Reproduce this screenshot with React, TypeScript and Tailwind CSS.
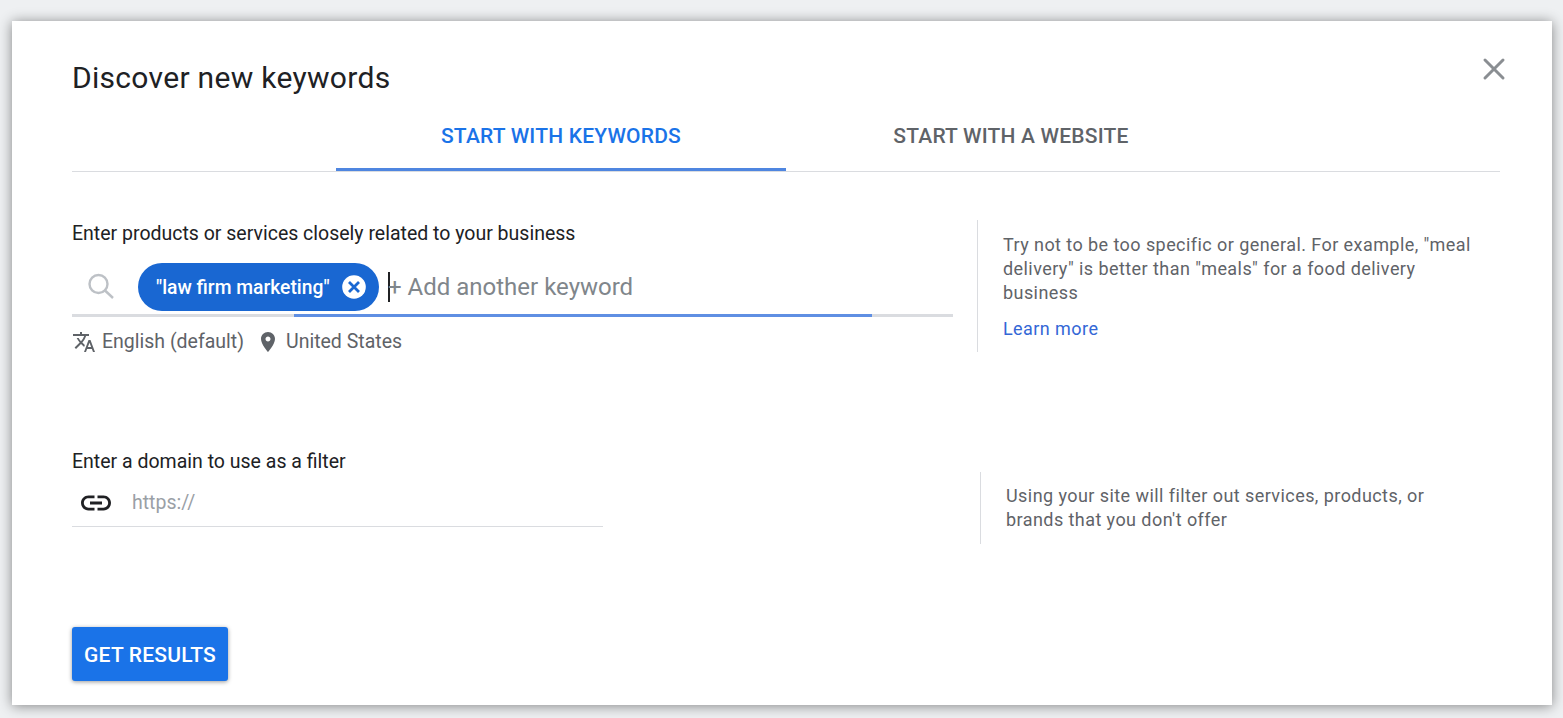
import { X } from 'lucide-react'

function TranslateIcon() {
  return (
    <svg width="24" height="24" viewBox="0 0 24 24" fill="#5f6368">
      <path d="M12.87 15.07l-2.54-2.51.03-.03c1.74-1.94 2.98-4.17 3.71-6.53H17V4h-7V2H8v2H1v1.99h11.17C11.5 7.92 10.44 9.75 9 11.35 8.07 10.32 7.3 9.19 6.69 8h-2c.73 1.63 1.73 3.17 2.98 4.56l-5.09 5.02L4 19l5-5 3.11 3.11.76-2.04zM18.5 10h-2L12 22h2l1.12-3h4.75L21 22h2l-4.5-12zm-2.62 7l1.62-4.33L19.12 17h-3.24z" />
    </svg>
  )
}

function PinIcon() {
  return (
    <svg width="24" height="24" viewBox="0 0 24 24" fill="#5f6368">
      <path d="M12 2C8.13 2 5 5.13 5 9c0 5.25 7 13 7 13s7-7.75 7-13c0-3.87-3.13-7-7-7zm0 9.5c-1.38 0-2.5-1.12-2.5-2.5s1.12-2.5 2.5-2.5 2.5 1.12 2.5 2.5-1.12 2.5-2.5 2.5z" />
    </svg>
  )
}

function SearchIcon() {
  return (
    <svg width="26" height="26" viewBox="0 0 26 26" fill="none" stroke="#bdc1c6" strokeWidth="2.4" className="-mt-[2px] ml-[16px] shrink-0">
      <circle cx="10.5" cy="11" r="9" />
      <path d="M17 17.5l8 7.5" />
    </svg>
  )
}

function LinkIcon() {
  return (
    <svg width="36" height="36" viewBox="0 0 24 24" fill="#202124">
      <path d="M3.9 12c0-1.71 1.39-3.1 3.1-3.1h4V7H7c-2.76 0-5 2.24-5 5s2.24 5 5 5h4v-1.9H7c-1.71 0-3.1-1.39-3.1-3.1zM8 13h8v-2H8v2zm9-6h-4v1.9h4c1.71 0 3.1 1.39 3.1 3.1s-1.39 3.1-3.1 3.1h-4V17h4c2.76 0 5-2.24 5-5s-2.24-5-5-5z" />
    </svg>
  )
}

function ChipClose() {
  return (
    <svg width="24" height="24" viewBox="0 0 24 24" className="shrink-0">
      <circle cx="12" cy="12" r="11.8" fill="#ffffff" />
      <path d="M7 7l10 10M17 7L7 17" stroke="#1967d2" strokeWidth="2.8" fill="none" />
    </svg>
  )
}

export default function App() {
  return (
    <div className="h-[718px] overflow-hidden bg-[#eef0f2] pt-[21px] pl-[12px] font-['Roboto',sans-serif]">
      <div className="relative h-[684px] w-[1540px] bg-white pl-[60px] pr-[52px] shadow-[0_1px_12px_rgba(0,0,0,0.45)]">
        {/* Close */}
        <button className="absolute top-[30px] right-[40px] text-[#8a8e92]">
          <X size={36} strokeWidth={2} />
        </button>

        {/* Header */}
        <h1 className="pt-[38px] text-[30px] leading-[38px] tracking-[0.3px] text-[#202124]">Discover new keywords</h1>

        {/* Tabs */}
        <div className="mt-[15px] flex h-[60px] justify-center border-b border-[#dadce0]">
          <div className="flex h-[59px] w-[450px] items-center justify-center border-b-[3px] border-[#4f86e0] pb-[7px] text-[21px] font-medium tracking-[0.2px] text-[#1a73e8]">
            START WITH KEYWORDS
          </div>
          <div className="flex h-[59px] w-[450px] items-center justify-center pb-[10px] text-[21px] font-medium tracking-[0.2px] text-[#5f6368]">
            START WITH A WEBSITE
          </div>
        </div>

        {/* Keywords section */}
        <div className="mt-[50px] flex">
          <div className="w-[881px]">
            <p className="text-[19.5px] leading-[24px] text-[#202124]">Enter products or services closely related to your business</p>
            <div className="relative mt-[18px] flex h-[53px] items-center border-b-[3px] border-[#dadce0] pb-[5px]">
              <SearchIcon />
              <div className="ml-[24px] flex h-[48px] w-[241px] items-center justify-between rounded-full bg-[#1967d2] pl-[18px] pr-[13px] text-[19.3px] font-medium text-white">
                <span className="whitespace-nowrap pt-[4px]">"law firm marketing"</span>
                <ChipClose />
              </div>
              <span className="ml-[9px] h-[30px] w-[2px] bg-[#202124]" />
              <span className="ml-[-2px] text-[24px] text-[#80868b]">+ Add another keyword</span>
              <span className="absolute right-[81px] bottom-[-3px] left-[222px] h-[3px] bg-[#5f8fe3]" />
            </div>
            <div className="mt-[11px] flex items-center text-[19.5px] leading-[28px] text-[#5f6368]">
              <TranslateIcon />
              <span className="ml-[6px]">English (default)</span>
              <span className="ml-[12px]"><PinIcon /></span>
              <span className="ml-[6px]">United States</span>
            </div>
          </div>
          <div className="ml-[24px] -mt-[2px] h-[132px] border-l border-[#dadce0] pl-[25px] text-[18px] leading-[24px] tracking-[0.43px] text-[#5f6368]">
            <p className="w-[475px] pt-[13px]">Try not to be too specific or general. For example, "meal delivery" is better than "meals" for a food delivery business</p>
            <a className="mt-[12px] block text-[#3367d6]">Learn more</a>
          </div>
        </div>

        {/* Domain section */}
        <div className="mt-[94px] flex">
          <div className="w-[884px]">
            <p className="text-[19.5px] leading-[24px] text-[#202124]">Enter a domain to use as a filter</p>
            <div className="mt-[5px] flex h-[48px] w-[531px] items-center border-b border-[#dadce0]">
              <span className="ml-[6px]"><LinkIcon /></span>
              <span className="ml-[18px] text-[19.5px] text-[#9aa0a6]">https://</span>
            </div>
          </div>
          <div className="ml-[24px] mt-[22px] h-[72px] border-l border-[#dadce0] pl-[25px] text-[18px] leading-[24px] tracking-[0.43px] text-[#5f6368]">
            <p className="w-[475px] pt-[12px]">Using your site will filter out services, products, or brands that you don't offer</p>
          </div>
        </div>

        {/* Submit */}
        <button className="mt-[83px] h-[54px] w-[156px] rounded-[3px] bg-[#1a73e8] pt-[4px] text-[21px] font-medium tracking-[0.2px] text-white shadow-[0_1px_4px_rgba(0,0,0,0.4)]">
          GET RESULTS
        </button>
      </div>
    </div>
  )
}
